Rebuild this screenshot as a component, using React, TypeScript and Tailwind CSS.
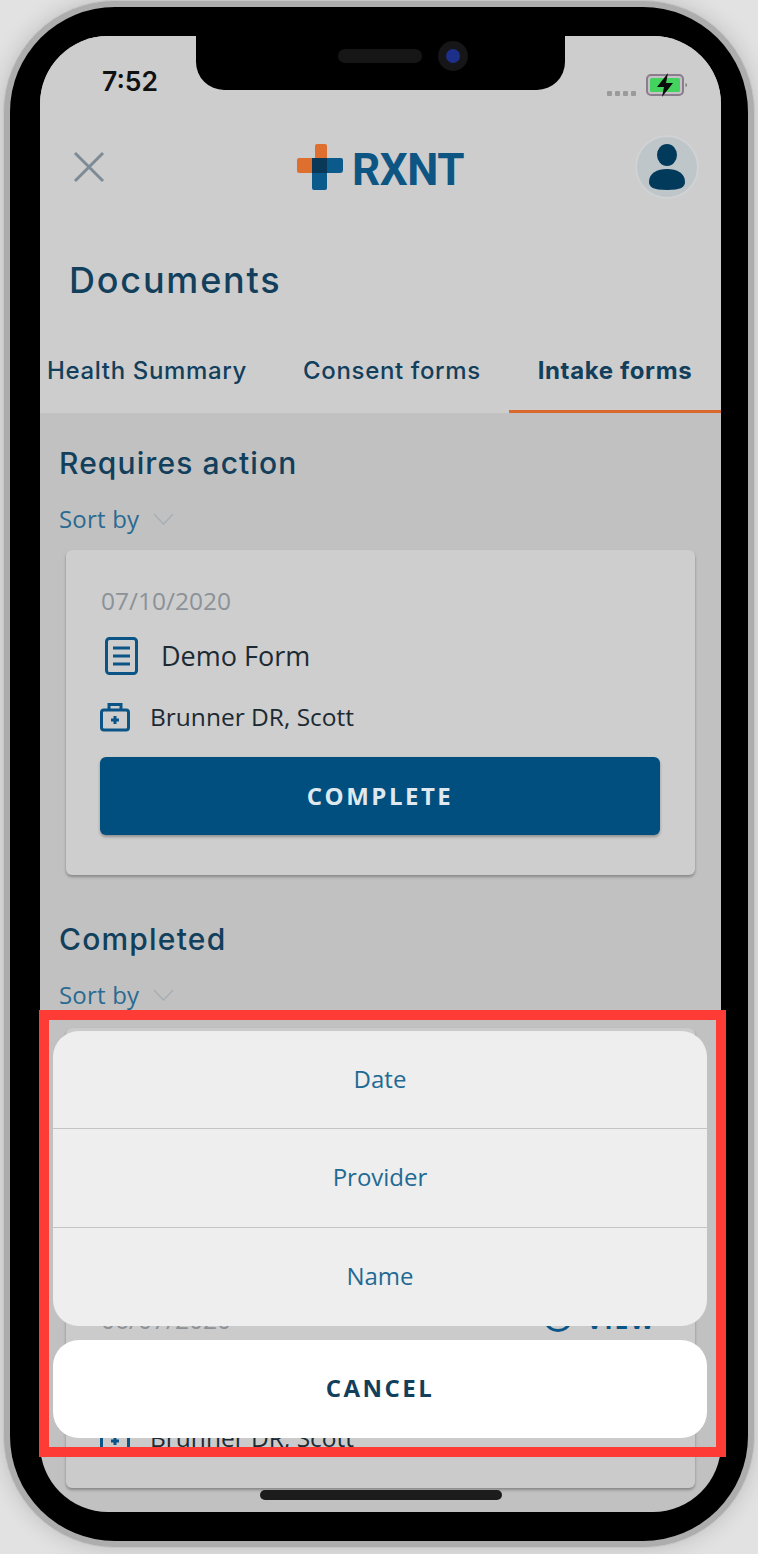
const body = "font-['Nunito','Noto_Sans','Open_Sans',sans-serif]";
const heading = "font-['Inter','Noto_Sans',sans-serif]";

function Chevron() {
  return (
    <svg className="w-[21px] h-[12px]" viewBox="0 0 21 12" fill="none" stroke="#a9afb3" strokeWidth={1.6}>
      <path d="M1 1l9.5 10L20 1" />
    </svg>
  );
}

function SortBy({ className }: { className: string }) {
  return (
    <div className={`flex items-center gap-[14px] h-[34px] pb-[2px] ${className}`}>
      <span className="font-['Open_Sans',sans-serif] text-[24px] tracking-[0.2px] text-[#2a6a92]">Sort by</span>
      <Chevron />
    </div>
  );
}

function BagIcon() {
  return (
    <svg className="w-[30px] h-[30px] shrink-0" viewBox="0 0 30 30" fill="none" stroke="#0b5486" strokeWidth={3}>
      <rect x="1.5" y="8" width="27" height="20" rx="2.5" />
      <path d="M9 8V2.5h12V8" />
      <path d="M15 14v8M11 18h8" />
    </svg>
  );
}

function Provider({ className }: { className: string }) {
  return (
    <div className={`flex items-center gap-[20px] h-[34px] ${className}`}>
      <BagIcon />
      <span className="font-['Open_Sans',sans-serif] text-[24.5px] text-[#1c2a33]">Brunner DR, Scott</span>
    </div>
  );
}

export default function App() {
  return (
    <div className="relative w-[758px] h-[1554px] overflow-hidden bg-[#e2e2e2]">
      {/* phone body */}
      <div className="ml-[3px] w-[752px] h-[1548px] rounded-[112px] border border-[#c6c6c6] bg-[#adadad] p-[6px] shadow-[0_0_22px_rgba(0,0,0,0.16)]">
        <div className="w-[738px] h-[1534px] rounded-[105px] bg-black pt-[29px] pl-[30px]">
          <div className="relative w-[681px] h-[1476px] rounded-[68px] overflow-hidden bg-[#c1c1c1]">
            {/* top area */}
            <div className="h-[377px] bg-[#cdcdcd]">
              <div className="h-[87px] flex items-end justify-between pl-[62px] pr-[34px] pb-[26px]">
                <span className="font-['Inter',sans-serif] text-[26.5px] leading-[32px] font-semibold text-[#111]">7:52</span>
                <div className="flex items-center gap-[10px]">
                  <div className="flex gap-[3px] mt-[16px]">
                    <span className="w-[5px] h-[5px] rounded-[1px] bg-[#9a9a9a]" />
                    <span className="w-[5px] h-[5px] rounded-[1px] bg-[#9a9a9a]" />
                    <span className="w-[5px] h-[5px] rounded-[1px] bg-[#9a9a9a]" />
                    <span className="w-[5px] h-[5px] rounded-[1px] bg-[#9a9a9a]" />
                  </div>
                  <svg className="w-[41px] h-[24px]" viewBox="0 0 41 24">
                    <rect x="1" y="2" width="36" height="20" rx="4" fill="#c8c0c8" stroke="#8a7d8c" strokeWidth="2" />
                    <rect x="4" y="5" width="30" height="14" rx="1.5" fill="#45d35f" />
                    <path d="M39.500 10v4c1-.3 1.500-1 1.500-2s-.5-1.700-1.500-2z" fill="#7d7d7d" />
                    <path d="M22 0L11 14h7l-2 10 11-14h-7z" fill="#0c0c0c" />
                  </svg>
                </div>
              </div>

              {/* header */}
              <div className="h-[88px] flex items-center justify-between pl-[32px] pr-[24px]">
                <svg className="w-[34px] h-[34px]" viewBox="0 0 34 34" stroke="#7d8b96" strokeWidth={3} fill="none">
                  <path d="M3 3l28 28M31 3L3 31" />
                </svg>
                <div className="flex items-center gap-[9px] ml-[18px]">
                  <svg className="w-[46px] h-[46px]" viewBox="0 0 46 46">
                    <path d="M18 2a2 2 0 012-2h8a2 2 0 012 2v27H2a2 2 0 01-2-2v-11a2 2 0 012-2h16z" fill="#de6f2e" />
                    <path d="M15 14h29a2 2 0 012 2v10a3 3 0 01-3 3H30v15a2 2 0 01-2 2h-11a2 2 0 01-2-2z" fill="#0b5a8c" />
                    <rect x="15" y="14" width="15" height="15" fill="#0a3957" />
                  </svg>
                  <span className="font-['Roboto',sans-serif] text-[44px] leading-[46px] font-bold tracking-[-0.5px] text-[#0d5684] mt-[6px]">RXNT</span>
                </div>
                <div className="w-[60px] h-[60px] rounded-full bg-[#bfc6ca] shadow-[0_0_0_2px_#d0d2d3] flex items-center justify-center">
                  <svg className="w-[36px] h-[46px]" viewBox="0 0 36 46" fill="#023a5c">
                    <ellipse cx="18" cy="11" rx="10" ry="11" />
                    <path d="M0 38c0-9 8-13 18-13s18 4 18 13c0 5-4 8-18 8S0 43 0 38z" />
                  </svg>
                </div>
              </div>

              <h1 className={`${heading} mt-[46px] h-[46px] pl-[29px] text-[36px] leading-[46px] font-medium tracking-[1.8px] text-[#123f5c]`}>
                Documents
              </h1>

              {/* tabs */}
              <div className={`${heading} mt-[24px] h-[86px] flex text-[24px] tracking-[0.65px] text-[#123f5c]`}>
                <div className="w-[235px] pl-[7px] pt-[2px] flex items-center font-medium">Health Summary</div>
                <div className="w-[234px] pt-[2px] flex items-center justify-center font-medium">Consent forms</div>
                <div className="w-[212px] flex items-center justify-center font-bold border-b-[3px] border-[#d9692f] pt-[5px]">
                  Intake forms
                </div>
              </div>
            </div>

            {/* document lists */}
            <div className="px-[19px]">
              <h2 className={`${heading} mt-[31px] h-[38px] text-[30px] leading-[38px] font-medium tracking-[1.1px] text-[#123f5c]`}>
                Requires action
              </h2>
              <SortBy className="mt-[21px]" />

              <div className={`${body} mt-[13px] mx-[7px] h-[325px] rounded-[6px] bg-[#cecece] shadow-[0_2px_3px_rgba(0,0,0,0.3)] pt-[36px] pl-[34px] pr-[35px]`}>
                <div className="font-['Open_Sans',sans-serif] h-[30px] pl-[1px] text-[24.5px] leading-[30px] text-[#8b9298]">07/10/2020</div>
                <div className="mt-[20px] h-[40px] flex items-center gap-[23px] pl-[5px]">
                  <svg className="w-[33px] h-[38px] shrink-0" viewBox="0 0 33 38" fill="none" stroke="#0b5486" strokeWidth={3}>
                    <rect x="1.500" y="1.500" width="30" height="35" rx="3" />
                    <path d="M8 11h17M8 19h17M8 27h17" />
                  </svg>
                  <span className="font-['Open_Sans',sans-serif] text-[27px] text-[#1c2a33]">Demo Form</span>
                </div>
                <Provider className="mt-[24px]" />
                <div className="mt-[23px] h-[78px] rounded-[6px] bg-[#004f7f] shadow-[0_2px_3px_rgba(0,0,0,0.3)] flex items-center justify-center font-['Open_Sans',sans-serif] text-[24px] font-bold tracking-[2.5px] text-[#dfe8ee]">
                  COMPLETE
                </div>
              </div>

              <h2 className={`${heading} mt-[45px] h-[38px] text-[30px] leading-[38px] font-medium tracking-[1.2px] text-[#123f5c]`}>
                Completed
              </h2>
              <SortBy className="mt-[21px]" />

              <div className={`${body} mt-[15px] mx-[7px] h-[460px] rounded-[6px] bg-[#cbcbcb] shadow-[0_2px_3px_rgba(0,0,0,0.3)] pt-[277px] pl-[35px] pr-[39px]`}>
                <div className="h-[30px] flex items-center justify-between">
                  <span className="font-['Open_Sans',sans-serif] text-[24.5px] leading-[30px] text-[#8b9298]">06/07/2020</span>
                  <div className="flex items-center gap-[14px]">
                    <svg className="w-[30px] h-[30px] mb-[6px]" viewBox="0 0 30 30" fill="none" stroke="#0b5486" strokeWidth={3}>
                      <circle cx="15" cy="15" r="13.500" />
                      <circle cx="15" cy="15" r="4" />
                    </svg>
                    <span className="font-['Open_Sans',sans-serif] text-[24.5px] font-bold tracking-[2px] text-[#0b5486]">VIEW</span>
                  </div>
                </div>
                <Provider className="mt-[86px] -ml-[1px]" />
              </div>
            </div>

            {/* action sheet */}
            <div className="absolute left-[13px] top-[995px] w-[654px] font-['Open_Sans',sans-serif]">
              <div className="rounded-[26px] bg-[#eeeeee] text-[24px] text-[#1f6a93] divide-y divide-[#c4c4c4]">
                <div className="h-[98px] pb-[2px] flex items-center justify-center">Date</div>
                <div className="h-[99px] pb-[2px] flex items-center justify-center">Provider</div>
                <div className="h-[98px] pb-[2px] flex items-center justify-center">Name</div>
              </div>
              <div className="mt-[14px] h-[98px] pb-[2px] rounded-[26px] bg-white flex items-center justify-center text-[24px] font-bold tracking-[2.5px] text-[#123f5c]">
                CANCEL
              </div>
            </div>

            {/* home indicator */}
            <div className="absolute left-[220px] top-[1454px] w-[242px] h-[10px] rounded-full bg-[#1c1c1c]" />
          </div>
        </div>
      </div>

      {/* notch */}
      <div className="absolute left-[196px] top-[36px] w-[369px] h-[54px] rounded-b-[28px] bg-black">
        <div className="absolute left-[142px] top-[13px] w-[84px] h-[14px] rounded-full bg-[#161616]" />
        <div className="absolute left-[242px] top-[5px] w-[30px] h-[30px] rounded-full bg-[#161618] flex items-center justify-center">
          <div className="w-[14px] h-[14px] rounded-full bg-[#1c2f8a]" />
        </div>
      </div>

      {/* highlight */}
      <div className="absolute left-[39px] top-[1010px] w-[687px] h-[447px] border-[10px] border-[#ff3b36]" />
    </div>
  );
}
